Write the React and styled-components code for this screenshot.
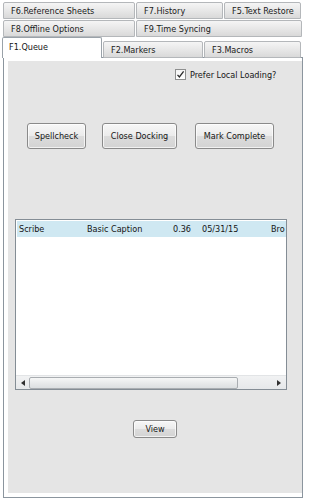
import React from 'react';
import styled, { createGlobalStyle } from 'styled-components';

const Global = createGlobalStyle`
  html, body { margin: 0; padding: 0; background: #ffffff; }
  body {
    font-family: "DejaVu Sans Condensed", "DejaVu Sans", sans-serif;
    font-stretch: condensed;
    font-size: 9px;
    color: #151515;
  }
  #root { width: 310px; height: 504px; }
`;

const Window = styled.div`
  width: 310px;
  height: 504px;
  box-sizing: border-box;
  padding: 2px 7px 6px 3px;
  display: flex;
  flex-direction: column;
`;

const TabRow = styled.div`
  display: flex;
  gap: 1px;
  height: ${p => p.$h || 17}px;
  align-items: flex-end;
  margin-bottom: ${p => p.$mb || 0}px;
  margin-left: ${p => p.$ml || 0}px;
  position: relative;
  z-index: ${p => p.$z || 0};
`;

const Tab = styled.div`
  box-sizing: border-box;
  width: ${p => p.$w}px;
  height: 17px;
  border: 1px solid #b4b7ba;
  border-radius: 2px 2px 0 0;
  background: linear-gradient(#f5f5f5, #e6e6e6 55%, #d9d9d9);
  padding-left: 7px;
  display: flex;
  align-items: center;
  white-space: nowrap;
  overflow: hidden;
  color: #1a1a1a;
`;

const ActiveTab = styled.div`
  box-sizing: border-box;
  width: ${p => p.$w}px;
  height: 21px;
  border: 1px solid #9aa2a9;
  border-bottom: none;
  border-radius: 2px 2px 0 0;
  background: #ffffff;
  padding: 4px 0 0 6px;
  white-space: nowrap;
  color: #151515;
`;

const Panel = styled.div`
  flex: 1;
  border: 1px solid #8b959e;
  background: #ffffff;
  padding: 3px 0 4px 4px;
  display: flex;
  flex-direction: column;
`;

const Content = styled.div`
  flex: 1;
  background: #e5e5e5;
  display: flex;
  flex-direction: column;
`;

const CheckRow = styled.label`
  display: flex;
  align-items: center;
  gap: 4px;
  margin: 8px 0 0 167px;
  height: 11px;
  white-space: nowrap;
`;

const Box = styled.span`
  box-sizing: border-box;
  width: 11px;
  height: 11px;
  border: 1px solid #8e8f8f;
  background: linear-gradient(#f4f4f4, #ffffff);
  display: flex;
  align-items: center;
  justify-content: center;
`;

const ButtonRow = styled.div`
  display: flex;
  margin: 43px 0 0 19px;
`;

const Button = styled.button`
  box-sizing: border-box;
  width: ${p => p.$w}px;
  height: ${p => p.$h || 26}px;
  margin-right: ${p => p.$mr || 0}px;
  border: 1px solid #8a8a8a;
  border-radius: 3px;
  background: linear-gradient(#f7f7f7, #ebebeb 50%, #dcdcdc 51%, #d3d3d3);
  font: inherit;
  color: #151515;
  padding: 0;
  white-space: nowrap;
  box-shadow: inset 0 0 0 1px rgba(255,255,255,0.7);
`;

const ListBox = styled.div`
  box-sizing: border-box;
  width: 272px;
  height: 171px;
  margin: 70px 0 0 7px;
  border: 1px solid #848d95;
  background: #ffffff;
  display: flex;
  flex-direction: column;
  overflow: hidden;
`;

const ListArea = styled.div`
  flex: 1;
  padding: 1px 0 0 1px;
  overflow: hidden;
`;

const ListRow = styled.div`
  display: flex;
  height: 16px;
  align-items: center;
  background: #cfe8f2;
  white-space: nowrap;
  overflow: hidden;
`;

const Cell = styled.span`
  flex: none;
  box-sizing: border-box;
  width: ${p => p.$w}px;
  padding-left: ${p => p.$pl || 0}px;
`;

const ScrollBar = styled.div`
  height: 13px;
  display: flex;
  align-items: center;
  background: linear-gradient(#f1f2f3, #e6e8ea);
  border-top: 1px solid #e2e4e6;
`;

const Arrow = styled.div`
  width: 12px;
  height: 12px;
  display: flex;
  align-items: center;
  justify-content: center;
  margin-left: ${p => p.$ml || 0}px;
`;

const Thumb = styled.div`
  box-sizing: border-box;
  width: 209px;
  height: 12px;
  border: 1px solid #a9adb1;
  border-radius: 2px;
  background: linear-gradient(#f6f7f7, #e8eaeb 50%, #dcdfe1);
`;

const ViewButton = styled(Button)`
  align-self: center;
  margin-top: 30px;
`;

const Check = () => (
  <svg width="9" height="9" viewBox="0 0 9 9">
    <path d="M1.5 4.8 L3.4 7 L7.6 1.4" fill="none" stroke="#2a2a2a" strokeWidth="1.3" />
  </svg>
);

const Tri = ({ dir }) => (
  <svg width="4" height="6" viewBox="0 0 4 6">
    {dir === 'l'
      ? <path d="M4 0 L0 3 L4 6 Z" fill="#303030" />
      : <path d="M0 0 L4 3 L0 6 Z" fill="#303030" />}
  </svg>
);

export default function App() {
  return (
    <>
      <Global />
      <Window>
        <TabRow $mb={1}>
          <Tab $w={132}>F6.Reference Sheets</Tab>
          <Tab $w={87}>F7.History</Tab>
          <Tab $w={77}>F5.Text Restore</Tab>
        </TabRow>
        <TabRow>
          <Tab $w={132}>F8.Offline Options</Tab>
          <Tab $w={166}>F9.Time Syncing</Tab>
        </TabRow>
        <TabRow $h={21} $ml={-1} $z={2} $mb={-1}>
          <ActiveTab $w={100}>F1.Queue</ActiveTab>
          <Tab $w={100}>F2.Markers</Tab>
          <Tab $w={97}>F3.Macros</Tab>
        </TabRow>
        <Panel>
          <Content>
            <CheckRow>
              <Box><Check /></Box>
              <span>Prefer Local Loading?</span>
            </CheckRow>
            <ButtonRow>
              <Button $w={59} $mr={16}>Spellcheck</Button>
              <Button $w={75} $mr={18}>Close Docking</Button>
              <Button $w={79}>Mark Complete</Button>
            </ButtonRow>
            <ListBox>
              <ListArea>
                <ListRow>
                  <Cell $w={70} $pl={2}>Scribe</Cell>
                  <Cell $w={86}>Basic Caption</Cell>
                  <Cell $w={29}>0.36</Cell>
                  <Cell $w={69}>05/31/15</Cell>
                  <Cell $w={14}>Bro</Cell>
                </ListRow>
              </ListArea>
              <ScrollBar>
                <Arrow $ml={1}><Tri dir="l" /></Arrow>
                <Thumb />
                <Arrow $ml={35}><Tri dir="r" /></Arrow>
              </ScrollBar>
            </ListBox>
            <ViewButton $w={44} $h={18}>View</ViewButton>
          </Content>
        </Panel>
      </Window>
    </>
  );
}
